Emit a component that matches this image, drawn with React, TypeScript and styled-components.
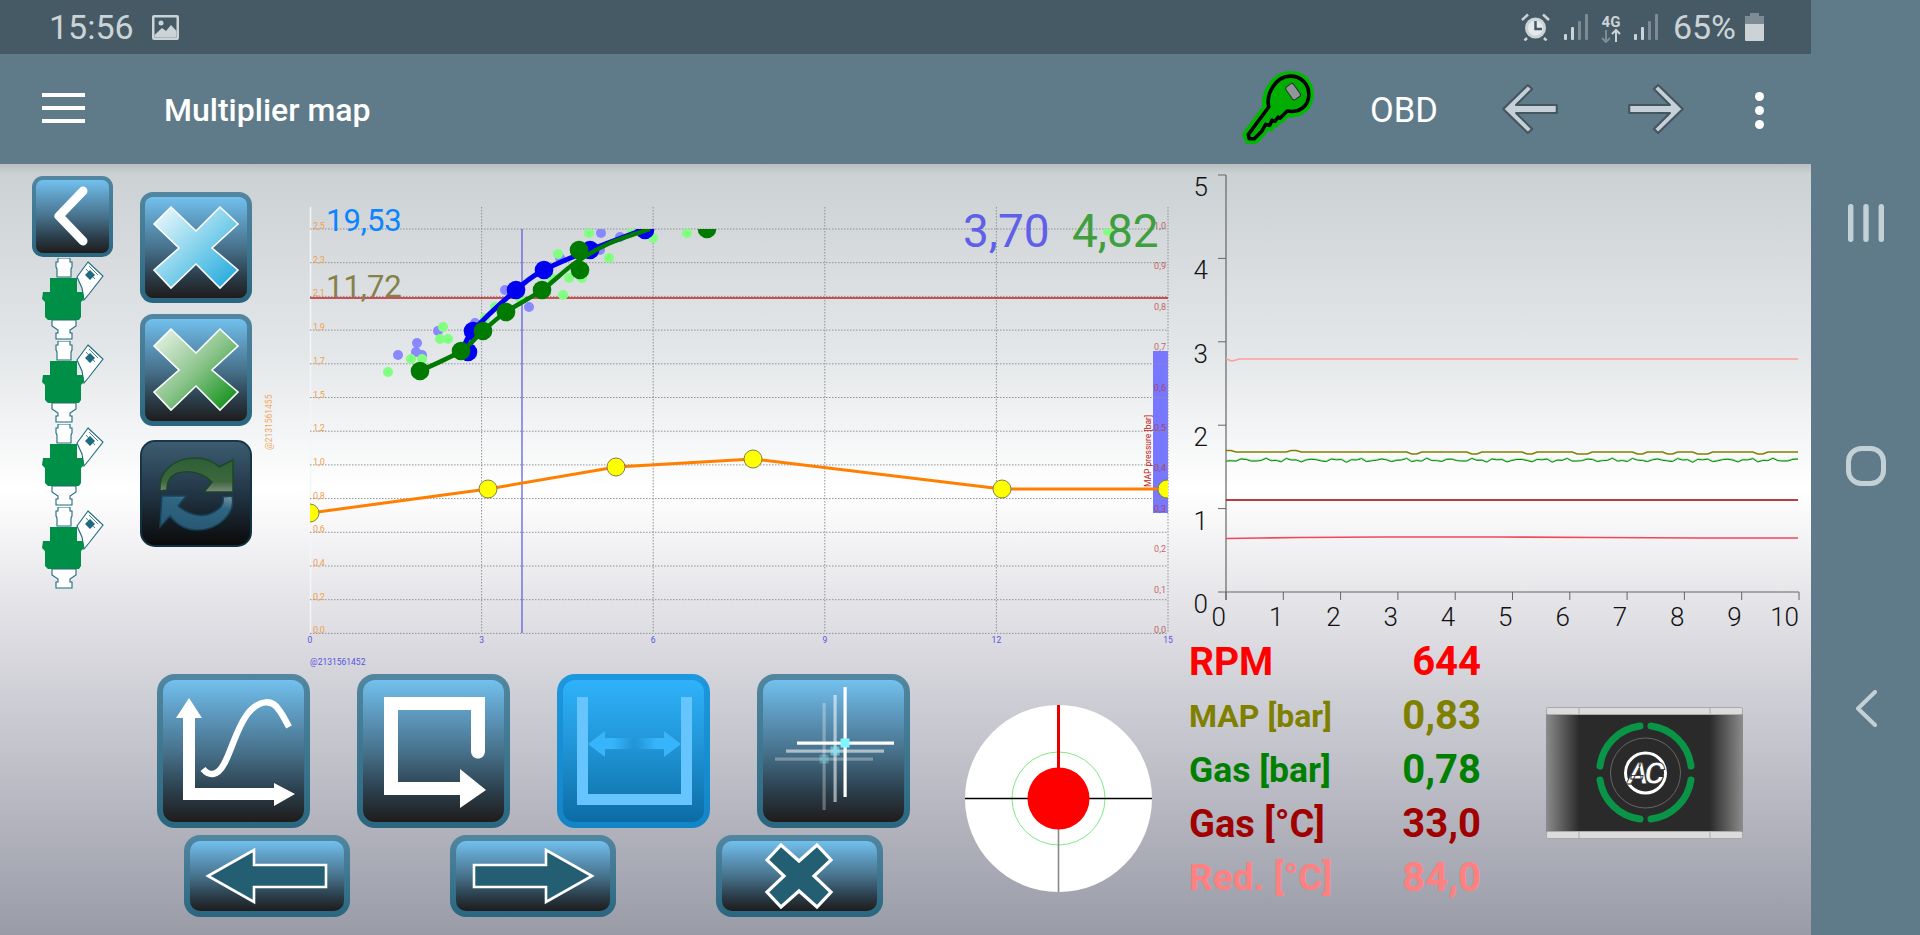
import React from "react";
import styled, { createGlobalStyle } from "styled-components";

const Global = createGlobalStyle`
  html, body { margin: 0; padding: 0; background: #5f7b8a; }
  body { font-family: Roboto, "Liberation Sans", sans-serif; overflow: hidden; }
`;

const Page = styled.div`
  display: flex;
  width: 1920px;
  height: 935px;
  overflow: hidden;
`;
const Main = styled.div`
  display: flex;
  flex-direction: column;
  width: 1811px;
`;
const NavRail = styled.div`
  width: 109px;
  background: #5f7b8a;
  display: flex;
  flex-direction: column;
  align-items: center;
  padding-top: 204px;
  box-sizing: border-box;
  gap: 204px;
  svg { display: block; flex: none; }
`;
const StatusBar = styled.div`
  height: 54px;
  background: #455a65;
  display: flex;
  align-items: center;
  justify-content: space-between;
  padding: 0 47px 0 49px;
  color: #ccd3d7;
`;
const StatusGroup = styled.div`
  display: flex;
  align-items: center;
  gap: ${(p: { $gap: number }) => p.$gap}px;
`;
const StatusText = styled.span`
  font-size: 34px;
  line-height: 54px;
  font-weight: 400;
`;
const Toolbar = styled.div`
  height: 110px;
  background: #5f7b8a;
  display: flex;
  align-items: center;
  color: #fff;
`;
const Burger = styled.div`
  width: 43px;
  height: 30px;
  margin-left: 42px;
  margin-bottom: 2px;
  display: flex;
  flex-direction: column;
  justify-content: space-between;
  span { display: block; height: 4px; background: #fff; }
`;
const Title = styled.div`
  margin-left: 79px;
  margin-top: 2px;
  font-size: 32px;
  font-weight: 500;
  width: 1077px;
`;
const ObdLabel = styled.div`
  font-size: 34.5px;
  font-weight: 400;
  margin-left: 55px;
  margin-top: 2px;
  width: 130px;
`;
const Dots = styled.div`
  display: flex;
  flex-direction: column;
  gap: 5px;
  margin-left: 69px;
  margin-top: 2px;
  span { width: 9px; height: 9px; border-radius: 50%; background: #fff; display: block; }
`;
const Content = styled.div`
  flex: 1;
  display: flex;
  background: linear-gradient(180deg, #b9bec1 0px, #ccd1d4 10px, #e4e7e9 190px, #ffffff 326px, #d8d8de 490px, #999ba7 771px);
`;
const LeftPane = styled.div`
  width: 1180px;
  display: flex;
  flex-direction: column;
`;
const UpperRow = styled.div`
  height: 510px;
  display: flex;
  padding-left: 32px;
  box-sizing: border-box;
`;
const BackColumn = styled.div`
  width: 81px;
  padding-top: 12px;
  display: flex;
  flex-direction: column;
  align-items: center;
`;
const InjectorStack = styled.div`
  display: flex;
  flex-direction: column;
  margin-top: 1px;
  svg { display: block; width: 62px; height: 83px; }
`;
const ToolColumn = styled.div`
  margin-left: 27px;
  padding-top: 28px;
  display: flex;
  flex-direction: column;
  gap: 11px;
`;
const RefreshSlot = styled.div`
  margin-top: 3px;
`;
const ChartFrame = styled.div`
  position: relative;
  margin-left: 8px;
  margin-top: 36px;
  width: 920px;
  height: 474px;
  svg { display: block; }
`;
const Readout = styled.div<{ $color: string; $size: number; $x: number; $y: number }>`
  position: absolute;
  left: ${(p) => p.$x}px;
  top: ${(p) => p.$y}px;
  color: ${(p) => p.$color};
  font-size: ${(p) => p.$size}px;
  line-height: 1;
  font-weight: 400;
`;
const LowerRow = styled.div`
  display: flex;
  padding-left: 157px;
`;
const ButtonBlock = styled.div`
  display: flex;
  flex-direction: column;
  gap: 7px;
`;
const SquareRow = styled.div`
  display: flex;
  gap: 47px;
`;
const WideRow = styled.div`
  display: flex;
  gap: 100px;
  padding-left: 27px;
`;
const Gauge = styled.svg`
  display: block;
  width: 187px;
  height: 187px;
  margin-left: 55px;
  margin-top: 31px;
`;
const KeyButton = styled.div<{ $w: number; $h: number; $b: number; $r: number; $kind: string }>`
  width: ${(p) => p.$w}px;
  height: ${(p) => p.$h}px;
  box-sizing: border-box;
  border: ${(p) => p.$b}px solid transparent;
  border-radius: ${(p) => p.$r}px;
  flex: none;
  background: ${(p) =>
    p.$kind === "active"
      ? "linear-gradient(180deg,#2fb2fa 0%,#2196d8 45%,#0c6ca4 100%) padding-box, linear-gradient(180deg,#1d97df,#1285c7) border-box"
      : p.$kind === "dark"
      ? "linear-gradient(180deg,#3d5c70 0%,#24394a 45%,#0a0a0a 100%) padding-box, linear-gradient(180deg,#18384a,#0f3040) border-box"
      : "linear-gradient(180deg,#72c1ee 0%,#5f9cc2 22%,#48728c 50%,#2b3f4c 78%,#1f1c1c 100%) padding-box, linear-gradient(180deg,#5286a1,#2a667f) border-box"};
  svg { display: block; width: 100%; height: 100%; overflow: visible; }
`;
const RightPane = styled.div`
  width: 631px;
  display: flex;
  flex-direction: column;
  padding-top: 6px;
  box-sizing: border-box;
`;
const TrendChart = styled.svg`
  display: block;
  width: 631px;
  height: 465px;
`;
const InfoRow = styled.div`
  display: flex;
`;
const DataTable = styled.div`
  width: 292px;
  margin-left: 9px;
  display: flex;
  flex-direction: column;
`;
const DataLine = styled.div<{ $color: string }>`
  height: 54px;
  display: flex;
  align-items: center;
  justify-content: space-between;
  line-height: 54px;
  color: ${(p) => p.$color};
  font-weight: 700;
`;
const DataName = styled.span<{ $size: number }>`
  font-size: ${(p) => p.$size}px;
  font-weight: 700;
`;
const DataValue = styled.span`
  font-size: 40px;
  font-weight: 700;
`;
const Logo = styled.svg`
  display: block;
  width: 197px;
  height: 132px;
  margin-left: 65px;
  margin-top: 72px;
`;

const IconButton = ({ w, h, b = 6, r = 18, kind = "normal", children }: { w: number; h: number; b?: number; r?: number; kind?: string; children: React.ReactNode }) => (
  <KeyButton $w={w} $h={h} $b={b} $r={r} $kind={kind}>
    <svg viewBox={`${b} ${b} ${w - 2 * b} ${h - 2 * b}`} preserveAspectRatio="none">{children}</svg>
  </KeyButton>
);

const smooth = (pts: number[][]) => {
  let d = `M${pts[0][0]},${pts[0][1]}`;
  for (let i = 0; i < pts.length - 1; i++) {
    const p0 = pts[i - 1] || pts[i];
    const p1 = pts[i];
    const p2 = pts[i + 1];
    const p3 = pts[i + 2] || p2;
    d += ` C${p1[0] + (p2[0] - p0[0]) / 6},${p1[1] + (p2[1] - p0[1]) / 6} ${p2[0] - (p3[0] - p1[0]) / 6},${p2[1] - (p3[1] - p1[1]) / 6} ${p2[0]},${p2[1]}`;
  }
  return d;
};

const Injector = () => (
  <svg viewBox="0 0 62 83">
    <path d="M16,0 H28 V4 H30 V9 L29,11 V19 H15 V11 L14,9 V4 H16 Z" fill="#fff" stroke="#1e6a7e" strokeWidth="1.1" />
    <path d="M46,4 L61,18 L47,36 L42,42 L40,30 L35,19 Z" fill="#fff" stroke="#1e6a7e" strokeWidth="1.1" />
    <path d="M47,8 L56,17 M44,11 L53,21" stroke="#1e6a7e" strokeWidth="0.8" fill="none" />
    <path d="M48,12 L53,17 L48,22 L43,17 Z" fill="#1e6a7e" />
    <path d="M8,20 H35 V34 H41 L42,41 L39,44 V59 L37,62 H6 L3,59 V44 L0,41 L1,34 H8 Z" fill="#008f46" />
    <path d="M10,62 H34 V68 L28,72 V75 H30 V81 H14 V75 H16 V72 L10,68 Z" fill="#fff" stroke="#1e6a7e" strokeWidth="1.1" />
  </svg>
);

const bigX = "14,32 31,15 56,39 80,15 98,32 72,56 98,78 80,96 56,72 31,96 14,78 39,56";

const gridH = Array.from({ length: 13 }, (_, i) => 229 + 33.7 * i);
const gridV = [310, 481.6, 653.2, 824.8, 996.4, 1168];
const leftLabels = ["2,5", "2,3", "2,1", "1,9", "1,7", "1,5", "1,2", "1,0", "0,8", "0,6", "0,4", "0,2", "0,0"];
const rightLabels = ["1,0", "0,9", "0,8", "0,7", "0,6", "0,5", "0,4", "0,3", "0,2", "0,1", "0,0"];
const xLabels = ["0", "3", "6", "9", "12", "15"];

const blueDots = [[398, 355], [417, 343], [416, 352], [422, 355], [438, 331], [475, 323], [505, 290], [529, 307], [560, 258], [601, 233], [620, 237], [600, 250], [647, 233], [478, 325], [470, 340]];
const greenDots = [[388, 372], [411, 359], [422, 359], [443, 327], [440, 339], [448, 339], [472, 334], [485, 318], [495, 307], [520, 298], [552, 278], [558, 254], [563, 295], [569, 278], [582, 278], [609, 258], [589, 233], [632, 231], [653, 238], [687, 233], [1108, 231]];
const bluePts = [[462, 352], [473, 331], [516, 290], [544, 270], [590, 250], [645, 229]];
const greenPts = [[420, 371], [461, 351], [483, 331], [506, 312], [542, 290], [575, 263], [610, 243], [650, 229]];
const blueBig = [[468, 352], [473, 331], [516, 290], [544, 270], [590, 250], [645, 230]];
const greenBig = [[420, 371], [461, 351], [483, 331], [506, 312], [542, 290], [580, 270], [579, 250], [707, 229]];
const yellowPts = [[310, 513], [488, 489], [616, 467], [753, 459], [1002, 489], [1167, 489]];

const TX0 = 1226;
const TX1 = 1799;
const TY = (v: number) => 592 - 83.4 * v;
const dips = [3.3, 4.3, 5.3, 6.2, 7.2, 7.7, 8.3, 9.3];
const olivePts = Array.from({ length: 115 }, (_, i) => {
  const t = i / 11.45;
  let y = 452;
  if (t < 0.15) y = 450.5;
  if (Math.abs(t - 1.2) < 0.1) y = 450.5;
  if (dips.some((d) => Math.abs(t - d) < 0.1)) y = 454;
  return `${TX0 + (i * 572) / 114},${y}`;
}).join(" ");
const greenTrend = Array.from({ length: 115 }, (_, i) => {
  const y = 460.3 + 1.2 * Math.sin(i * 1.37) + 0.9 * Math.sin(i * 2.91 + 1);
  return [TX0 + (i * 572) / 114, Number(y.toFixed(1))];
});
const redTrend = [[1226, 538.5], [1260, 538], [1300, 537.5], [1380, 537], [1500, 537], [1600, 537.5], [1700, 538], [1798, 538]];

const rows = [
  { name: "RPM", value: "644", color: "#ff0000", size: 39 },
  { name: "MAP [bar]", value: "0,83", color: "#808000", size: 32 },
  { name: "Gas [bar]", value: "0,78", color: "#008000", size: 35.5 },
  { name: "Gas [°C]", value: "33,0", color: "#a00000", size: 38 },
  { name: "Red. [°C]", value: "84,0", color: "#ff8080", size: 37 },
];

const Signal = () => (
  <svg width="24" height="26" viewBox="0 0 24 26">
    <rect x="0" y="20" width="3" height="6" rx="1" fill="#ccd3d7" />
    <rect x="7" y="13" width="3" height="13" rx="1" fill="#ccd3d7" />
    <rect x="14" y="7" width="3" height="19" rx="1" fill="#7c8b94" />
    <rect x="21" y="0" width="3" height="26" rx="1" fill="#7c8b94" />
  </svg>
);

export default function App() {
  return (
    <Page>
      <Global />
      <Main>
        <StatusBar>
          <StatusGroup $gap={18}>
            <StatusText>15:56</StatusText>
            <svg width="27" height="25" viewBox="0 0 27 25">
              <rect width="27" height="25" rx="2" fill="#ccd3d7" />
              <rect x="2.5" y="2.5" width="22" height="20" fill="#455a65" />
              <circle cx="9" cy="8" r="2.5" fill="#ccd3d7" />
              <path d="M2.5,20 L10,13 L14,16 L19,10 L24.5,16 V22.5 H2.5 Z" fill="#ccd3d7" />
            </svg>
          </StatusGroup>
          <StatusGroup $gap={12}>
            <svg width="29" height="28" viewBox="0 0 29 28" style={{ marginRight: 2 }}>
              <circle cx="14.5" cy="15" r="10.5" fill="#ccd3d7" />
              <circle cx="14.5" cy="15" r="7.5" fill="#e6eaec" />
              <path d="M14.5,8 V16 H21" stroke="#455a65" strokeWidth="2.5" fill="none" />
              <path d="M1,7 L7,1.5 M28,7 L22,1.5 M6,25 L3.5,27.5 M23,25 L25.5,27.5" stroke="#ccd3d7" strokeWidth="2.5" />
            </svg>
            <Signal />
            <svg width="22" height="31" viewBox="0 -3 22 31">
              <text x="11" y="12" textAnchor="middle" fontSize="15" fontWeight="700" fontFamily="Roboto" fill="#ccd3d7">4G</text>
              <path d="M6,15 V27 M2,23 L6,27 L10,23" stroke="#7c8b94" strokeWidth="2" fill="none" />
              <path d="M16,27 V15 M12,19 L16,15 L20,19" stroke="#ccd3d7" strokeWidth="2" fill="none" />
            </svg>
            <Signal />
            <StatusText style={{ marginLeft: 3 }}>65%</StatusText>
            <svg width="19" height="28" viewBox="0 0 19 28" style={{ marginLeft: -3 }}>
              <rect x="5" y="0" width="9" height="3" fill="#7c8b94" />
              <rect x="0" y="3" width="19" height="25" rx="1" fill="#ccd3d7" />
              <rect x="0" y="3" width="19" height="8" rx="1" fill="#7c8b94" />
            </svg>
          </StatusGroup>
        </StatusBar>
        <Toolbar>
          <Burger><span /><span /><span /></Burger>
          <Title>Multiplier map</Title>
          <svg width="74" height="76" viewBox="0 0 72 74" style={{ flex: "none" }}>
            <g strokeLinejoin="round">
              <path d="M48,3 C61,3 68,12 68,23 C68,36 57,44 45,42 L39,48 L37,47 L34,52 L31,50 L29,56 L25,54 L21,61 L14,68 L7,68 L4,62 L24,35 C21,22 32,3 48,3 Z" fill="#00b000" stroke="#00b800" strokeWidth="6" />
              <path d="M48,5 C59,5 66,13 66,23 C66,35 56,41 45,39 L38,46 L36,45 L33,49 L30,48 L28,53 L24,52 L20,59 L13,66 L8,66 L7,62 L27,35 C24,22 34,5 48,5 Z" fill="#00ad00" stroke="#000" strokeWidth="3.5" />
              <rect x="46" y="13" width="9" height="15" rx="2" fill="#8f979c" stroke="#333" strokeWidth="1" transform="rotate(-35 50 20)" />
            </g>
          </svg>
          <ObdLabel>OBD</ObdLabel>
          <svg width="60" height="52" viewBox="0 0 56 52" preserveAspectRatio="none" style={{ flex: "none" }}>
            <path d="M3,26 L26,2 L30,6 L15,22 H53 V30 H15 L30,46 L26,50 Z" fill="#c5d0d8" stroke="#45565f" strokeWidth="2" strokeLinejoin="round" />
          </svg>
          <svg width="60" height="52" viewBox="0 0 56 52" preserveAspectRatio="none" style={{ flex: "none", marginLeft: 66 }}>
            <path d="M53,26 L30,2 L26,6 L41,22 H3 V30 H41 L26,46 L30,50 Z" fill="#c5d0d8" stroke="#45565f" strokeWidth="2" strokeLinejoin="round" />
          </svg>
          <Dots><span /><span /><span /></Dots>
        </Toolbar>
        <Content>
          <LeftPane>
            <UpperRow>
              <BackColumn>
                <IconButton w={81} h={81} b={4} r={11}>
                  <path d="M51,15 L27,40 L51,65" fill="none" stroke="#fff" strokeWidth="9" strokeLinecap="round" strokeLinejoin="round" />
                </IconButton>
                <InjectorStack>
                  <Injector /><Injector /><Injector /><Injector />
                </InjectorStack>
              </BackColumn>
              <ToolColumn>
                <IconButton w={112} h={111} b={5} r={13}>
                  <defs>
                    <linearGradient id="xb" x1="0" y1="0" x2="1" y2="1"><stop offset="0" stopColor="#f4fbfe" /><stop offset=".5" stopColor="#85d2ec" /><stop offset="1" stopColor="#18a5dc" /></linearGradient>
                  </defs>
                  <polygon points={bigX} fill="url(#xb)" stroke="#fff" strokeWidth="1.6" />
                </IconButton>
                <IconButton w={112} h={112} b={5} r={13}>
                  <defs>
                    <linearGradient id="xg" x1="0" y1="0" x2="1" y2="1"><stop offset="0" stopColor="#eef6ee" /><stop offset=".5" stopColor="#8cc48c" /><stop offset="1" stopColor="#008a0a" /></linearGradient>
                  </defs>
                  <polygon points={bigX} fill="url(#xg)" stroke="#fff" strokeWidth="1.6" />
                </IconButton>
                <RefreshSlot>
                  <IconButton w={112} h={107} b={2} r={15} kind="dark">
                    <defs>
                      <linearGradient id="rg" x1="0" y1="1" x2="0" y2="0"><stop offset="0" stopColor="#8d9c8c" /><stop offset=".3" stopColor="#436f3b" /><stop offset="1" stopColor="#2d6230" /></linearGradient>
                      <linearGradient id="rb" x1="1" y1="0" x2="0.6" y2="1"><stop offset="0" stopColor="#8fa6ae" /><stop offset=".35" stopColor="#33708e" /><stop offset="1" stopColor="#2c6584" /></linearGradient>
                    </defs>
                    <g opacity="0.85">
                      <path d="M20,51 C18,30 36,18 55,18 C65,18 73,21 79,27 L93,20 V52 H64 L72,42 C62,32 50,30 38,33 C28,36 27,44 27,50 Z" fill="url(#rg)" stroke="#174a20" strokeWidth="1.5" />
                      <path d="M22,56 H46 L38,66 C50,76 64,78 74,72 C82,68 84,62 83,57 L92,56 C96,72 80,90 57,90 C47,90 38,86 30,76 L20,87 Z" fill="url(#rb)" stroke="#174a64" strokeWidth="1.5" />
                    </g>
                  </IconButton>
                </RefreshSlot>
              </ToolColumn>
              <ChartFrame>
                <svg width="920" height="474" viewBox="260 200 920 474" fontFamily="Roboto, sans-serif">
                  <defs>
                    <clipPath id="plot"><rect x="310" y="229" width="858" height="404" /></clipPath>
                  </defs>
                  <line x1="310.5" y1="207" x2="310.5" y2="633" stroke="#f4f5f6" strokeWidth="1.5" />
                  <rect x="1153" y="351" width="15" height="162" fill="#7777ff" />
                  {gridH.map((y) => (
                    <line key={y} x1="310" x2="1168" y1={y} y2={y} stroke="#8e9295" strokeDasharray="1.5 1.5" />
                  ))}
                  {gridV.slice(1).map((x) => (
                    <line key={x} x1={x} x2={x} y1="207" y2="633" stroke="#8e9295" strokeDasharray="1.5 1.5" />
                  ))}
                  <line x1="310" x2="1168" y1="298" y2="298" stroke="#c02222" strokeWidth="1.6" />
                  <line x1="522" x2="522" y1="229" y2="633" stroke="#5555e0" strokeWidth="1.2" />
                  {leftLabels.map((l, i) => (
                    <text key={l + i} x="313" y={gridH[i]} fontSize="9" fill="#f0a050">{l}</text>
                  ))}
                  {rightLabels.map((l, i) => (
                    <text key={l} x="1166" y={229 + 40.4 * i} fontSize="9" textAnchor="end" fill="#b83838" opacity="0.75">{l}</text>
                  ))}
                  {xLabels.map((l, i) => (
                    <text key={l} x={gridV[i]} y="643" fontSize="8.5" textAnchor="middle" fill="#5555dd">{l}</text>
                  ))}
                  <text transform="translate(1151,487) rotate(-90)" fontSize="8.5" fill="#c02020">MAP pressure [bar]</text>
                  <text transform="translate(272,450) rotate(-90)" fontSize="8.5" fill="#f0a860">@2131561455</text>
                  <text x="310" y="665" fontSize="8.5" fill="#5555dd">@2131561452</text>
                  <g clipPath="url(#plot)">
                    {blueDots.map(([x, y], i) => <circle key={i} cx={x} cy={y} r="5" fill="#8888ff" />)}
                    {greenDots.map(([x, y], i) => <circle key={i} cx={x} cy={y} r="5" fill="#80ff80" />)}
                    <path d={smooth(bluePts)} fill="none" stroke="#0000f0" strokeWidth="5" />
                    {blueBig.map(([x, y], i) => <circle key={i} cx={x} cy={y} r="9.3" fill="#0000f0" />)}
                    <path d={smooth(greenPts)} fill="none" stroke="#007a00" strokeWidth="4.5" />
                    {greenBig.map(([x, y], i) => <circle key={i} cx={x} cy={y} r="9.3" fill="#007a00" />)}
                    <polyline points={yellowPts.map((p) => p.join(",")).join(" ")} fill="none" stroke="#ff7f00" strokeWidth="3" />
                    {yellowPts.map(([x, y], i) => <circle key={i} cx={x} cy={y} r="9" fill="#ffff00" stroke="#80804a" strokeWidth="1" />)}
                  </g>
                </svg>
                <Readout $color="#0a84ff" $size={31} $x={66} $y={5}>19,53</Readout>
                <Readout $color="#86804a" $size={31} $x={66} $y={71}>11,72</Readout>
                <Readout $color="#5f5fe8" $size={46} $x={703} $y={8}>3,70</Readout>
                <Readout $color="#3f9f3f" $size={46} $x={812} $y={8}>4,82</Readout>
              </ChartFrame>
            </UpperRow>
            <LowerRow>
              <ButtonBlock>
                <SquareRow>
                  <IconButton w={153} h={154}>
                    <path d="M32,24 L45,44 H38 V114 H117 V109 L138,120 L117,132 V126 H26 V44 H19 Z" fill="#fff" />
                    <path d="M46,95 C52,102 60,103 67,90 C75,76 80,52 92,38 C103,26 115,25 122,36 C126,41 128,46 132,53" fill="none" stroke="#fff" strokeWidth="6.5" />
                  </IconButton>
                  <IconButton w={153} h={154}>
                    <path d="M27,23 H128 V77 C128,87 114,87 114,77 V36 H41 V108 H103 V95 L129,116 L103,134 V121 H27 Z" fill="#fff" />
                  </IconButton>
                  <IconButton w={153} h={154} kind="active">
                    <defs>
                      <linearGradient id="fadeL" x1="0" x2="1" y1="0" y2="0"><stop offset="0" stopColor="#38b4fa" /><stop offset=".55" stopColor="#38b4fa" /><stop offset="1" stopColor="#38b4fa" stopOpacity="0" /></linearGradient>
                      <linearGradient id="fadeR" x1="1" x2="0" y1="0" y2="0"><stop offset="0" stopColor="#38b4fa" /><stop offset=".55" stopColor="#38b4fa" /><stop offset="1" stopColor="#38b4fa" stopOpacity="0" /></linearGradient>
                    </defs>
                    <path d="M20,23 H31 V120 H124 V23 H135 V131 H20 Z" fill="#66c4ff" />
                    <path d="M31,70 L48,57 V64 H76 V75 H48 V83 Z" fill="url(#fadeL)" />
                    <path d="M124,70 L107,57 V64 H79 V75 H107 V83 Z" fill="url(#fadeR)" />
                  </IconButton>
                  <IconButton w={153} h={154}>
                    <g fill="#fff">
                      <rect x="86.5" y="13" width="3.2" height="110" />
                      <rect x="40" y="67.5" width="97" height="3.2" />
                      <g opacity="0.55">
                        <rect x="76.5" y="21" width="3.2" height="107" />
                        <rect x="29" y="75.5" width="98" height="3.2" />
                      </g>
                      <g opacity="0.3">
                        <rect x="65.5" y="29" width="3.2" height="107" />
                        <rect x="18" y="83.5" width="98" height="3.2" />
                      </g>
                    </g>
                    <rect x="83.5" y="64.5" width="9" height="9" fill="#80f4ff" />
                    <rect x="73.5" y="72.5" width="9" height="9" fill="#80f4ff" opacity="0.55" />
                    <rect x="62.5" y="80.5" width="9" height="9" fill="#80f4ff" opacity="0.3" />
                  </IconButton>
                </SquareRow>
                <WideRow>
                  <IconButton w={166} h={82} r={16}>
                    <polygon points="24,41 70,15 70,30 142,30 142,52 70,52 70,67" fill="#245e73" stroke="#fff" strokeWidth="2.6" />
                  </IconButton>
                  <IconButton w={166} h={82} r={16}>
                    <polygon points="142,41 96,15 96,30 24,30 24,52 96,52 96,67" fill="#245e73" stroke="#fff" strokeWidth="2.6" />
                  </IconButton>
                  <IconButton w={167} h={82} r={16}>
                    <polygon points="51,25 65,10 83,26 101,10 115,25 98,41 115,57 101,72 83,56 65,72 51,57 68,41" fill="#245e73" stroke="#fff" strokeWidth="3.2" />
                  </IconButton>
                </WideRow>
              </ButtonBlock>
              <Gauge viewBox="0 0 187 187">
                <circle cx="93.5" cy="93.5" r="93.5" fill="#fff" />
                <circle cx="93.5" cy="93.5" r="46.5" fill="none" stroke="#80e880" strokeWidth="1" />
                <line x1="0" x2="187" y1="93.5" y2="93.5" stroke="#000" strokeWidth="1.6" />
                <line x1="93.5" x2="93.5" y1="93" y2="187" stroke="#888" strokeWidth="1.6" />
                <line x1="93.5" x2="93.5" y1="0" y2="93" stroke="#e80000" strokeWidth="3" />
                <circle cx="93.5" cy="93.5" r="31" fill="#ff0000" />
              </Gauge>
            </LowerRow>
          </LeftPane>
          <RightPane>
            <TrendChart viewBox="1180 170 631 465" fontFamily="Roboto, sans-serif">
              {[0, 1, 2, 3, 4, 5].map((v) => (
                <g key={v}>
                  <line x1="1218" x2={TX0} y1={TY(v)} y2={TY(v)} stroke="#666" strokeWidth="1" />
                  <text x="1208" y={TY(v) + 21} textAnchor="end" fontSize="26" fontWeight="300" fill="#111">{v}</text>
                </g>
              ))}
              <line x1={TX0} x2={TX0} y1="175" y2="600" stroke="#666" strokeWidth="1.2" />
              <line x1={TX0} x2={TX1} y1="592" y2="592" stroke="#666" strokeWidth="1.2" />
              {Array.from({ length: 11 }, (_, i) => {
                const x = TX0 + 57.3 * i;
                return (
                  <g key={i}>
                    <line x1={x} x2={x} y1="592" y2="600" stroke="#666" strokeWidth="1" />
                    <text x={x} y="626" textAnchor="end" fontSize="26" fontWeight="300" fill="#111">{i}</text>
                  </g>
                );
              })}
              <polyline points="1226,358.5 1229,360 1232,361 1236,360 1239,359 1798,359" fill="none" stroke="#ff9ea0" strokeWidth="1.6" />
              <polyline points={olivePts} fill="none" stroke="#808000" strokeWidth="1.5" />
              <polyline points={greenTrend.map(([x, y]) => `${x},${y - 0.7}`).join(" ")} fill="none" stroke="#90e890" strokeWidth="1.2" />
              <polyline points={greenTrend.map(([x, y]) => `${x},${y}`).join(" ")} fill="none" stroke="#0a800a" strokeWidth="1" />
              <line x1={TX0} x2="1798" y1="500" y2="500" stroke="#a00000" strokeWidth="1.5" />
              <polyline points={redTrend.map((p) => p.join(",")).join(" ")} fill="none" stroke="#f04858" strokeWidth="1.6" />
            </TrendChart>
            <InfoRow>
              <DataTable>
                {rows.map((r) => (
                  <DataLine key={r.name} $color={r.color}>
                    <DataName $size={r.size}>{r.name}</DataName>
                    <DataValue>{r.value}</DataValue>
                  </DataLine>
                ))}
              </DataTable>
              <Logo viewBox="0 0 197 132" fontFamily="Roboto, sans-serif">
                <defs>
                  <linearGradient id="side" x1="0" x2="1" y1="0" y2="0">
                    <stop offset="0" stopColor="#8c8c8c" /><stop offset=".17" stopColor="#2a2a2a" /><stop offset=".83" stopColor="#2a2a2a" /><stop offset="1" stopColor="#8c8c8c" />
                  </linearGradient>
                </defs>
                <rect x="0" y="7" width="197" height="118" fill="url(#side)" />
                <rect x="0.5" y="0.5" width="196" height="7" rx="1.5" fill="#dcdcdc" stroke="#aaa" />
                <rect x="0.5" y="124.5" width="196" height="7" rx="1.5" fill="#dcdcdc" stroke="#aaa" />
                <path d="M33,0.5 V8 M164,0.5 V8 M33,124 V131.5 M164,124 V131.5" stroke="#aaa" />
                <g fill="none" stroke="#0a9447" strokeWidth="7" strokeLinecap="round">
                  <path d="M94,19 A46,46 0 0 0 54,59" />
                  <path d="M105,19 A46,46 0 0 1 145,59" />
                  <path d="M54,73 A46,46 0 0 0 94,112" />
                  <path d="M145,73 A46,46 0 0 1 105,112" />
                </g>
                <circle cx="99.5" cy="66" r="35" fill="none" stroke="#666" strokeWidth="1" />
                <circle cx="99.5" cy="66" r="20" fill="none" stroke="#fff" strokeWidth="3" />
                <text x="98" y="77" textAnchor="middle" fontSize="32" fontWeight="700" fontStyle="italic" letterSpacing="-4" fill="#fff" stroke="#2a2a2a" strokeWidth="0.8">AC</text>
              </Logo>
            </InfoRow>
          </RightPane>
        </Content>
      </Main>
      <NavRail>
        <svg width="36" height="38" viewBox="0 0 36 38">
          <rect x="0" y="0" width="5.4" height="38" rx="2.7" fill="#c3d0d6" />
          <rect x="15.3" y="0" width="5.4" height="38" rx="2.7" fill="#c3d0d6" />
          <rect x="30.6" y="0" width="5.4" height="38" rx="2.7" fill="#c3d0d6" />
        </svg>
        <svg width="40" height="40" viewBox="0 0 40 40">
          <rect x="2.5" y="2.5" width="35" height="35" rx="13" fill="none" stroke="#c3d0d6" strokeWidth="5" />
        </svg>
        <svg width="22" height="37" viewBox="0 0 22 37">
          <path d="M20,2 L3,18.5 L20,35" fill="none" stroke="#c3d0d6" strokeWidth="4" strokeLinecap="round" strokeLinejoin="round" />
        </svg>
      </NavRail>
    </Page>
  );
}
